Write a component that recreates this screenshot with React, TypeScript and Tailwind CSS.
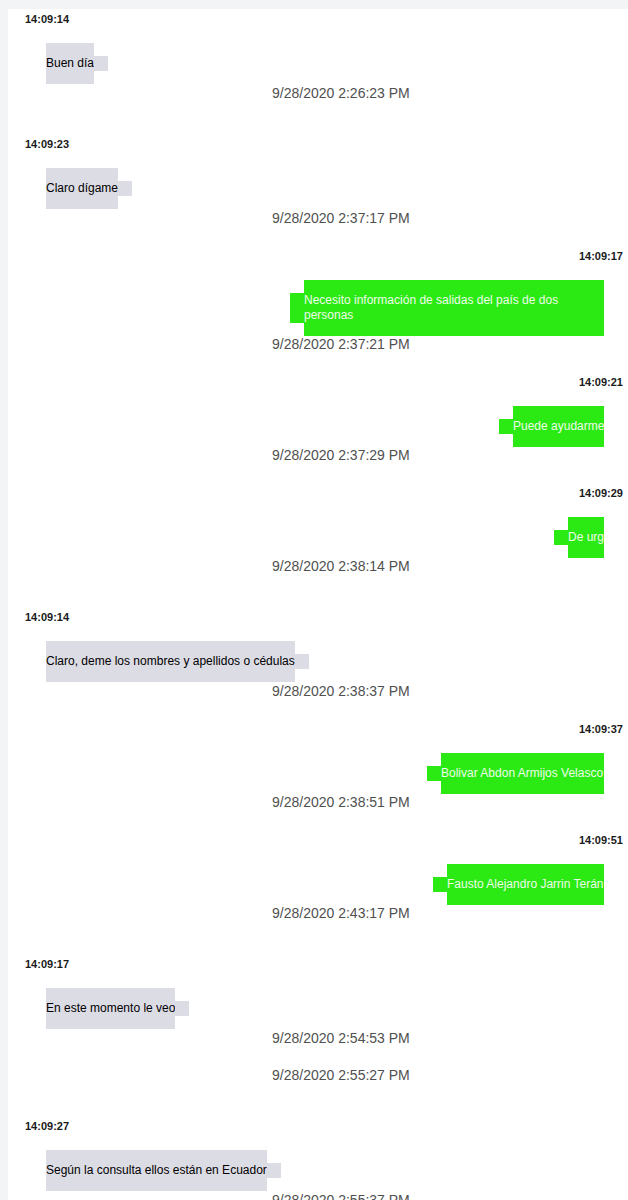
import { Fragment } from "react";

type Msg = {
  side: "in" | "out";
  time: string;
  lines: string[];
  width?: number;
  dates: string[];
};

const messages: Msg[] = [
  { side: "in", time: "14:09:14", lines: ["Buen día"], dates: ["9/28/2020 2:26:23 PM"] },
  { side: "in", time: "14:09:23", lines: ["Claro dígame"], dates: ["9/28/2020 2:37:17 PM"] },
  {
    side: "out",
    time: "14:09:17",
    lines: ["Necesito información de salidas del país de dos", "personas"],
    width: 300,
    dates: ["9/28/2020 2:37:21 PM"],
  },
  { side: "out", time: "14:09:21", lines: ["Puede ayudarme"], width: 91, dates: ["9/28/2020 2:37:29 PM"] },
  { side: "out", time: "14:09:29", lines: ["De urgencia"], width: 36, dates: ["9/28/2020 2:38:14 PM"] },
  {
    side: "in",
    time: "14:09:14",
    lines: ["Claro, deme los nombres y apellidos o cédulas"],
    dates: ["9/28/2020 2:38:37 PM"],
  },
  { side: "out", time: "14:09:37", lines: ["Bolivar Abdon Armijos Velasco"], width: 163, dates: ["9/28/2020 2:38:51 PM"] },
  { side: "out", time: "14:09:51", lines: ["Fausto Alejandro Jarrin Terán"], width: 157, dates: ["9/28/2020 2:43:17 PM"] },
  {
    side: "in",
    time: "14:09:17",
    lines: ["En este momento le veo"],
    dates: ["9/28/2020 2:54:53 PM", "9/28/2020 2:55:27 PM"],
  },
  {
    side: "in",
    time: "14:09:27",
    lines: ["Según la consulta ellos están en Ecuador"],
    dates: ["9/28/2020 2:55:37 PM"],
  },
];

function Strip({ color }: { color: string }) {
  return (
    <div className="flex flex-col py-[13px]">
      <div className={`flex-1 w-[14px] ${color}`} />
    </div>
  );
}

function Bubble({ msg }: { msg: Msg }) {
  const isIn = msg.side === "in";
  const bg = isIn ? "bg-[#dcdce5]" : "bg-[#2bea13]";
  return (
    <div className={isIn ? "flex ml-[38px]" : "flex justify-end mr-[24px]"}>
      {!isIn && <Strip color={bg} />}
      <div
        className={`${bg} py-[13px] text-[12px] leading-[15px] overflow-hidden whitespace-nowrap ${
          isIn ? "text-black" : "text-[#effbea]"
        }`}
        style={msg.width ? { width: msg.width } : undefined}
      >
        {msg.lines.map((l, k) => (
          <Fragment key={k}>
            {k > 0 && <br />}
            {l}
          </Fragment>
        ))}
      </div>
      {isIn && <Strip color={bg} />}
    </div>
  );
}

export default function App() {
  return (
    <div className="min-h-[1200px] bg-[#f3f4f6] pl-[8px] pt-[9px] font-['Liberation_Sans',Arial,sans-serif]">
      <div className="bg-white min-h-[1191px] pt-[2px] pb-10">
        {messages.map((m, i) => {
          const isIn = m.side === "in";
          const top = i === 0 ? "" : isIn ? "mt-[35px]" : "mt-[22px]";
          return (
            <div key={i} className={top}>
              <div
                className={`text-[11px] leading-[16px] font-bold text-[#1a1a1a] ${
                  isIn ? "pl-[17px]" : "text-right pr-[5px]"
                }`}
              >
                {m.time}
              </div>
              <div className="mt-[16px]">
                <Bubble msg={m} />
              </div>
              <div className={isIn ? "mt-[1px]" : ""}>
                {m.dates.map((d, j) => (
                  <div
                    key={j}
                    className={`pl-[264px] text-[14px] leading-[16px] text-[#505050] ${j > 0 ? "mt-[21px]" : ""}`}
                  >
                    {d}
                  </div>
                ))}
              </div>
            </div>
          );
        })}
      </div>
    </div>
  );
}
